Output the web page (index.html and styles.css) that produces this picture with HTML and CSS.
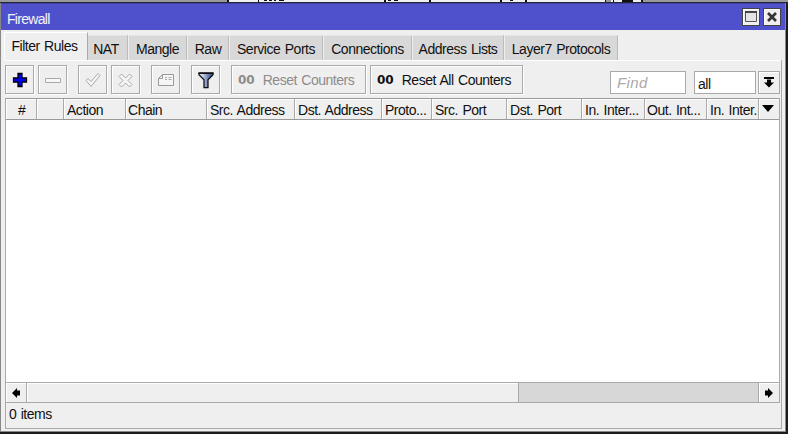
FILE: index.html
```html
<!DOCTYPE html>
<html lang="en">
<head>
  <meta charset="UTF-8">
  <title>Firewall</title>
  <link rel="stylesheet" href="styles.css">
</head>
<body>
  <!-- edge of the window behind -->
  <div class="behind">
    <svg width="788" height="3" viewBox="0 0 788 3">
      <path fill="#efefef" d="M229 0h376v2h-376zM611 0h30v2h-30z"/>
      <path fill="#111" d="M227 0h2v2h-2zM258 0h1v2h-1zM264 0h3v1h-3zM269 0h3v1h-3zM274 0h2v1h-2zM279 0h5v1h-5zM384 0h2v2h-2zM388 0h3v1h-3zM394 0h4v1h-4zM429 0h2v2h-2zM500 0h2v2h-2zM510 0h3v1h-3zM525 0h2v2h-2zM605 0h1v2h-1zM613 0h1v2h-1zM622 0h11v2h-11zM641 0h2v2h-2z"/>
    </svg>
  </div>

  <div class="window">
    <div class="titlebar">
      <span class="title">Firewall</span>
      <div class="win-btn">
        <svg width="14" height="14" viewBox="0 0 14 14"><path fill="#e4e4e4" stroke="#555" d="M1.500 2v9.500h11V2"/><path stroke="#444" stroke-width="2" d="M1 2h12"/></svg>
      </div>
      <div class="win-btn">
        <svg width="14" height="14" viewBox="0 0 14 14"><path fill="none" stroke="#333" stroke-width="2.600" d="M3 3l8 8M11 3l-8 8"/></svg>
      </div>
    </div>

    <div class="tabs">
      <div class="tab active">Filter Rules</div>
      <div class="tab nat">NAT</div>
      <div class="tab mangle">Mangle</div>
      <div class="tab raw">Raw</div>
      <div class="tab service">Service Ports</div>
      <div class="tab conn">Connections</div>
      <div class="tab lists">Address Lists</div>
      <div class="tab layer7">Layer7 Protocols</div>
    </div>

    <div class="pane">
      <div class="toolbar">
        <div class="btn">
          <svg width="27" height="27" viewBox="0 0 27 27"><path fill="#0000f4" stroke="#000" stroke-width="1.300" d="M12 7.500h4v4.500h4.500v4h-4.500v4.500h-4v-4.500H7.500v-4h4.500z"/></svg>
        </div>
        <div class="btn">
          <svg width="27" height="27" viewBox="0 0 27 27"><path fill="#f7f7f7" stroke="#aaa" d="M6.500 12.500h15v4h-15z"/></svg>
        </div>
        <div class="btn group">
          <svg width="27" height="27" viewBox="0 0 27 27"><path fill="#f5f5f5" stroke="#aaa" d="M7 14.500l2-2 3 3 7-8 2 2-9 11z"/></svg>
        </div>
        <div class="btn">
          <svg width="27" height="27" viewBox="0 0 27 27"><path fill="#f5f5f5" stroke="#aaa" d="M7 10.500l2.500-2.500 4 4 4-4 2.500 2.500-4 4 4 4-2.500 2.500-4-4-4 4L7 18.500l4-4z"/></svg>
        </div>
        <div class="btn group">
          <svg width="27" height="27" viewBox="0 0 27 27"><path fill="#f5f5f5" stroke="#999" d="M10.500 8.500h11v11h-15v-7zM10.500 8.500v4h-4"/><path stroke="#aaa" d="M13 11.500h2M16.500 11.500h3M13 13.500h2M16.500 13.500h3"/></svg>
        </div>
        <div class="btn group">
          <svg width="27" height="27" viewBox="0 0 27 27">
            <defs><linearGradient id="steel"><stop offset="0.200" stop-color="#d5dcee"/><stop offset="0.800" stop-color="#4961a0"/></linearGradient></defs>
            <path fill="url(#steel)" stroke="#111" stroke-width="1.300" d="M7 7.200h14v1.500l-5 5v8h-4v-8l-5-5z"/><path stroke="#111" stroke-width="1.600" d="M6.500 7.200h15"/>
          </svg>
        </div>
        <div class="btn counters group disabled">
          <b class="zeros">00</b><span>Reset Counters</span>
        </div>
        <div class="btn counters all">
          <b class="zeros">00</b><span>Reset All Counters</span>
        </div>
        <div class="find">Find</div>
        <div class="field">all</div>
        <div class="drop">
          <svg width="20" height="21" viewBox="0 0 20 21"><path d="M5 5h10v2H5zM8 7.500h4v3h3l-5 5-5-5h3z"/></svg>
        </div>
      </div>

      <div class="grid">
        <div class="head">
          <div class="num">#</div>
          <div></div>
          <div>Action</div>
          <div class="chain">Chain</div>
          <div>Src. Address</div>
          <div>Dst. Address</div>
          <div>Proto...</div>
          <div>Src. Port</div>
          <div>Dst. Port</div>
          <div>In. Inter...</div>
          <div class="chain">Out. Int...</div>
          <div>In. Inter.</div>
          <div class="more"><svg width="12" height="7" viewBox="0 0 12 7"><path d="M0 0h12L6 7z"/></svg></div>
        </div>
        <div class="rows"></div>
        <div class="scrollbar">
          <div class="arrow"><svg width="10" height="10" viewBox="0 0 10 10"><path d="M1 5l5-5v2.500h3v5H6V10z"/></svg></div>
          <div class="thumb"></div>
          <div class="track"></div>
          <div class="arrow"><svg width="10" height="10" viewBox="0 0 10 10"><path d="M9 5L4 0v2.500H1v5h3V10z"/></svg></div>
        </div>
      </div>
      <div class="status">0 items</div>
    </div>
  </div>
</body>
</html>
```

FILE: styles.css
```css
* {
  box-sizing: border-box;
}
body {
  margin: 0;
  width: 788px;
  height: 434px;
  overflow: hidden;
  background: #1b1b1b;
  font-family: "Liberation Sans", Arial, sans-serif;
  font-size: 14px;
  letter-spacing: -0.48px;
  word-spacing: 1px;
  color: #111;
  white-space: nowrap;
}
svg {
  display: block;
}
.behind {
  height: 3px;
  background: #999;
  border-bottom: 1px solid #24243c;
}
.window {
  display: flex;
  flex-direction: column;
  width: 786px;
  height: 429px;
  background: #efefef;
  border: 1px solid #888;
  border-top: 0;
}
.titlebar {
  display: flex;
  align-items: center;
  gap: 3px;
  height: 27px;
  padding: 0 4px 0 6px;
  background: #4e50cc;
  border-top: 1px solid #4041a5;
}
.title {
  flex: 1;
  padding-top: 4px;
  letter-spacing: -0.7px;
  color: #f4f4ff;
}
.win-btn {
  display: flex;
  align-items: center;
  justify-content: center;
  width: 18px;
  height: 18px;
  background: #efefef;
  border: 1px solid #444;
  box-shadow: inset 1px 1px #fff;
}
.tabs {
  display: flex;
  align-items: flex-end;
  gap: 1px;
  height: 30px;
  padding-left: 3px;
}
.tab {
  height: 25px;
  line-height: 27px;
  text-align: center;
  background: #d8d8d8;
  border-right: 1px solid #bbb;
  border-top: 1px solid #e4e4e4;
}
.tab.active {
  width: 84px;
  height: 28px;
  line-height: 26px;
  background: #efefef;
  border-top: 1px solid #fff;
  border-left: 1px solid #fff;
  border-right: 1px solid #aaa;
  margin-right: -1px;
  padding-right: 3px;
}
.nat { width: 40px; padding-right: 3px; }
.mangle { width: 58px; }
.raw { width: 41px; }
.service { width: 93px; }
.conn { width: 88px; }
.lists { width: 91px; }
.layer7 { width: 113px; }
.pane {
  display: flex;
  flex-direction: column;
  height: 369px;
  margin: 0 3px 0 4px;
  border-right: 1px solid #aaa;
  border-bottom: 1px solid #aaa;
  border-left: 1px solid #aaa;
}
.toolbar {
  display: flex;
  align-items: flex-start;
  height: 38px;
  padding-top: 4px;
  border-top: 1px solid #fff;
  margin-left: -1px;
  background: #efefef;
}
.btn {
  width: 29px;
  height: 29px;
  flex: none;
  margin-right: 4px;
  border: 1px solid #aaa;
  box-shadow: inset 1px 1px #fff, 1px 1px #fff;
}
.btn.group {
  margin-left: 7px;
}
.btn.counters {
  display: flex;
  align-items: center;
  gap: 8px;
  width: 135px;
  padding-left: 6px;
}
.btn.all {
  width: 153px;
}
.disabled {
  color: #8c8c8c;
}
.zeros {
  font: bold 12px "DejaVu Sans", sans-serif;
  letter-spacing: 0;
}
.find,
.field {
  height: 23px;
  margin-top: 6px;
  padding-left: 3px;
  line-height: 25px;
  background: #fff;
  border: 1px solid #aaa;
}
.find {
  width: 76px;
  margin-left: 83px;
  padding-left: 6px;
  line-height: 22px;
  font-style: italic;
  font-size: 15px;
  letter-spacing: 0.4px;
  color: #aaa;
}
.field {
  width: 62px;
  margin-left: 8px;
}
.drop {
  width: 22px;
  height: 23px;
  margin: 6px 0 0 2px;
  border: 1px solid #aaa;
  box-shadow: inset 1px 1px #fff;
}
.grid {
  width: 774px;
  border-right: 1px solid #aaa;
}
.head {
  display: grid;
  grid-template-columns: 31px 27px 62px 81px 88px 87px 50px 75px 75px 63px 62px 52px 20px;
  height: 22px;
  border-top: 1px solid #999;
  border-bottom: 1px solid #999;
}
.head div {
  padding-left: 3px;
  line-height: 22px;
  overflow: hidden;
  border-right: 1px solid #aaa;
  box-shadow: inset 1px 1px #fff;
}
.head .chain {
  padding-left: 2px;
}
.head .num {
  padding-left: 12px;
}
.head .more {
  padding: 6px 0 0 3px;
  border-right: 0;
}
.rows {
  height: 262px;
  background: #fff;
}
.scrollbar {
  display: flex;
  height: 21px;
  border-top: 1px solid #aaa;
  border-bottom: 1px solid #aaa;
}
.arrow {
  display: flex;
  align-items: center;
  justify-content: center;
  width: 20px;
  box-shadow: inset 1px 1px #fff;
}
.thumb {
  width: 493px;
  border-left: 1px solid #aaa;
  border-right: 1px solid #aaa;
  box-shadow: inset 1px 1px #fff;
}
.track {
  flex: 1;
  background: #d7d7d7;
  border-right: 1px solid #aaa;
}
.status {
  padding-left: 3px;
  line-height: 23px;
}
```
